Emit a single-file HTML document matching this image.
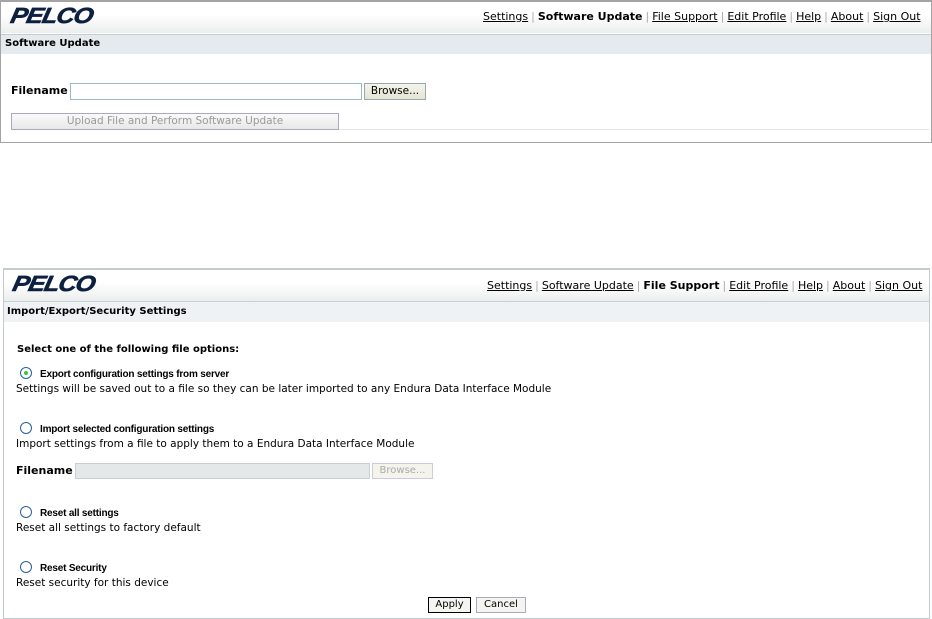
<!DOCTYPE html>
<html><head><meta charset="utf-8"><style>
*{margin:0;padding:0;box-sizing:border-box}
body{width:932px;height:619px;background:#fff;position:relative;font-family:"DejaVu Sans","Liberation Sans",sans-serif;font-size:10.5px;color:#000;overflow:hidden}
.a{position:absolute;white-space:nowrap}
.panel{position:absolute}
.hdr{position:absolute;left:0;right:0;top:0;height:31px;background:linear-gradient(#fff,#fff 40%,#eceeee)}
.band{position:absolute;left:0;right:0;top:31px;height:21px;background:#e4eaee;border-top:1px solid #c4ccd0}
.logo{position:absolute;font-family:"Liberation Sans",sans-serif;font-weight:900;font-style:italic;font-size:22px;color:#0d2040;letter-spacing:-1px;transform:skewX(-12deg) scaleX(1.15);transform-origin:left;-webkit-text-stroke:0.6px #0d2040}
.nav{position:absolute;font-size:11px;color:#000}
.nav u{text-decoration:underline}
.nav .s{color:#aaa;margin:0 3px}
.ttl{position:absolute;font-weight:bold;font-size:10px}
.btn{position:absolute;border:1px solid #9aa;background:linear-gradient(#f4f4ec,#e4e4d4);font-size:10.5px;text-align:center}
.radio{position:absolute;width:12px;height:12px;border-radius:50%;border:1.5px solid #2a5fa0;background:#fff}
.b{font-weight:bold;font-size:10px;font-family:"Liberation Sans",sans-serif;letter-spacing:-.2px}
</style></head><body>
<div class="panel" style="left:0;top:0;width:932px;height:143px;border:1px solid #a4a4a4;border-top:2px solid #a4a4a4">
 <div class="hdr"></div>
 <div class="band" style="top:32px;height:20px"></div>
 <div class="logo" style="left:10px;top:1px">PELCO</div>
 <div class="nav" style="left:482px;top:8px"><u>Settings</u><span class="s">|</span><b>Software Update</b><span class="s">|</span><u>File Support</u><span class="s">|</span><u>Edit Profile</u><span class="s">|</span><u>Help</u><span class="s">|</span><u>About</u><span class="s">|</span><u>Sign Out</u></div>
 <div class="ttl" style="left:4px;top:36px">Software Update</div>
 <div class="a" style="left:10px;top:82px;font-weight:bold;font-size:11px">Filename</div>
 <div class="a" style="left:69px;top:81px;width:292px;height:17px;border:1px solid #9bb"></div>
 <div class="btn" style="left:363px;top:81px;width:62px;height:17px;line-height:15px">Browse...</div>
 <div class="a" style="left:10px;top:111px;width:328px;height:17px;border:1px solid #aab;background:linear-gradient(#fafafa,#e8e8e8);color:#999;text-align:center;line-height:15px;font-size:10.5px">Upload File and Perform Software Update</div>
 <div class="a" style="left:338px;top:127px;width:590px;border-top:1px solid #dde4ea"></div>
</div>
<div class="panel" style="left:3px;top:268px;width:927px;height:351px;border:1px solid #c3cccc;border-top:2px solid #c3cccc">
 <div class="hdr"></div>
 <div class="band" style="top:31px;height:21px;background:#eef2f5;border-top:1px solid #c8d0d4"></div>
 <div class="logo" style="left:9px;top:1px">PELCO</div>
 <div class="nav" style="left:483px;top:9px"><u>Settings</u><span class="s">|</span><u>Software Update</u><span class="s">|</span><b>File Support</b><span class="s">|</span><u>Edit Profile</u><span class="s">|</span><u>Help</u><span class="s">|</span><u>About</u><span class="s">|</span><u>Sign Out</u></div>
 <div class="ttl" style="left:3px;top:36px">Import/Export/Security Settings</div>
 <div class="a" style="left:13px;top:74px;font-weight:bold;font-size:10px">Select one of the following file options:</div>
 <div class="radio" style="left:16px;top:97px"><div style="position:absolute;left:2.5px;top:2.5px;width:4px;height:4px;border-radius:50%;background:#3c3"></div></div>
 <div class="a b" style="left:36px;top:99px">Export configuration settings from server</div>
 <div class="a" style="left:12px;top:113px">Settings will be saved out to a file so they can be later imported to any Endura Data Interface Module</div>
 <div class="radio" style="left:16px;top:152px"></div>
 <div class="a b" style="left:36px;top:154px">Import selected configuration settings</div>
 <div class="a" style="left:12px;top:168px">Import settings from a file to apply them to a Endura Data Interface Module</div>
 <div class="a" style="left:12px;top:194px;font-weight:bold;font-size:11px">Filename</div>
 <div class="a" style="left:71px;top:193px;width:295px;height:16px;background:#e4e8e8;border:1px solid #c8d0d0"></div>
 <div class="a" style="left:368px;top:193px;width:61px;height:16px;border:1px solid #ccd;background:#f4f4ec;color:#aaa;text-align:center;font-size:10px;line-height:14px">Browse...</div>
 <div class="radio" style="left:16px;top:236px"></div>
 <div class="a b" style="left:36px;top:238px">Reset all settings</div>
 <div class="a" style="left:12px;top:252px">Reset all settings to factory default</div>
 <div class="radio" style="left:16px;top:291px"></div>
 <div class="a b" style="left:36px;top:293px">Reset Security</div>
 <div class="a" style="left:12px;top:307px">Reset security for this device</div>
 <div class="a" style="left:424px;top:327px;width:43px;height:16px;border:1px solid #000;background:#f4f4f0;text-align:center;font-size:10px;line-height:14px">Apply</div>
 <div class="a" style="left:472px;top:327px;width:50px;height:16px;border:1px solid #aab;background:#f4f4f0;text-align:center;font-size:10px;line-height:14px">Cancel</div>
</div>
</body></html>
